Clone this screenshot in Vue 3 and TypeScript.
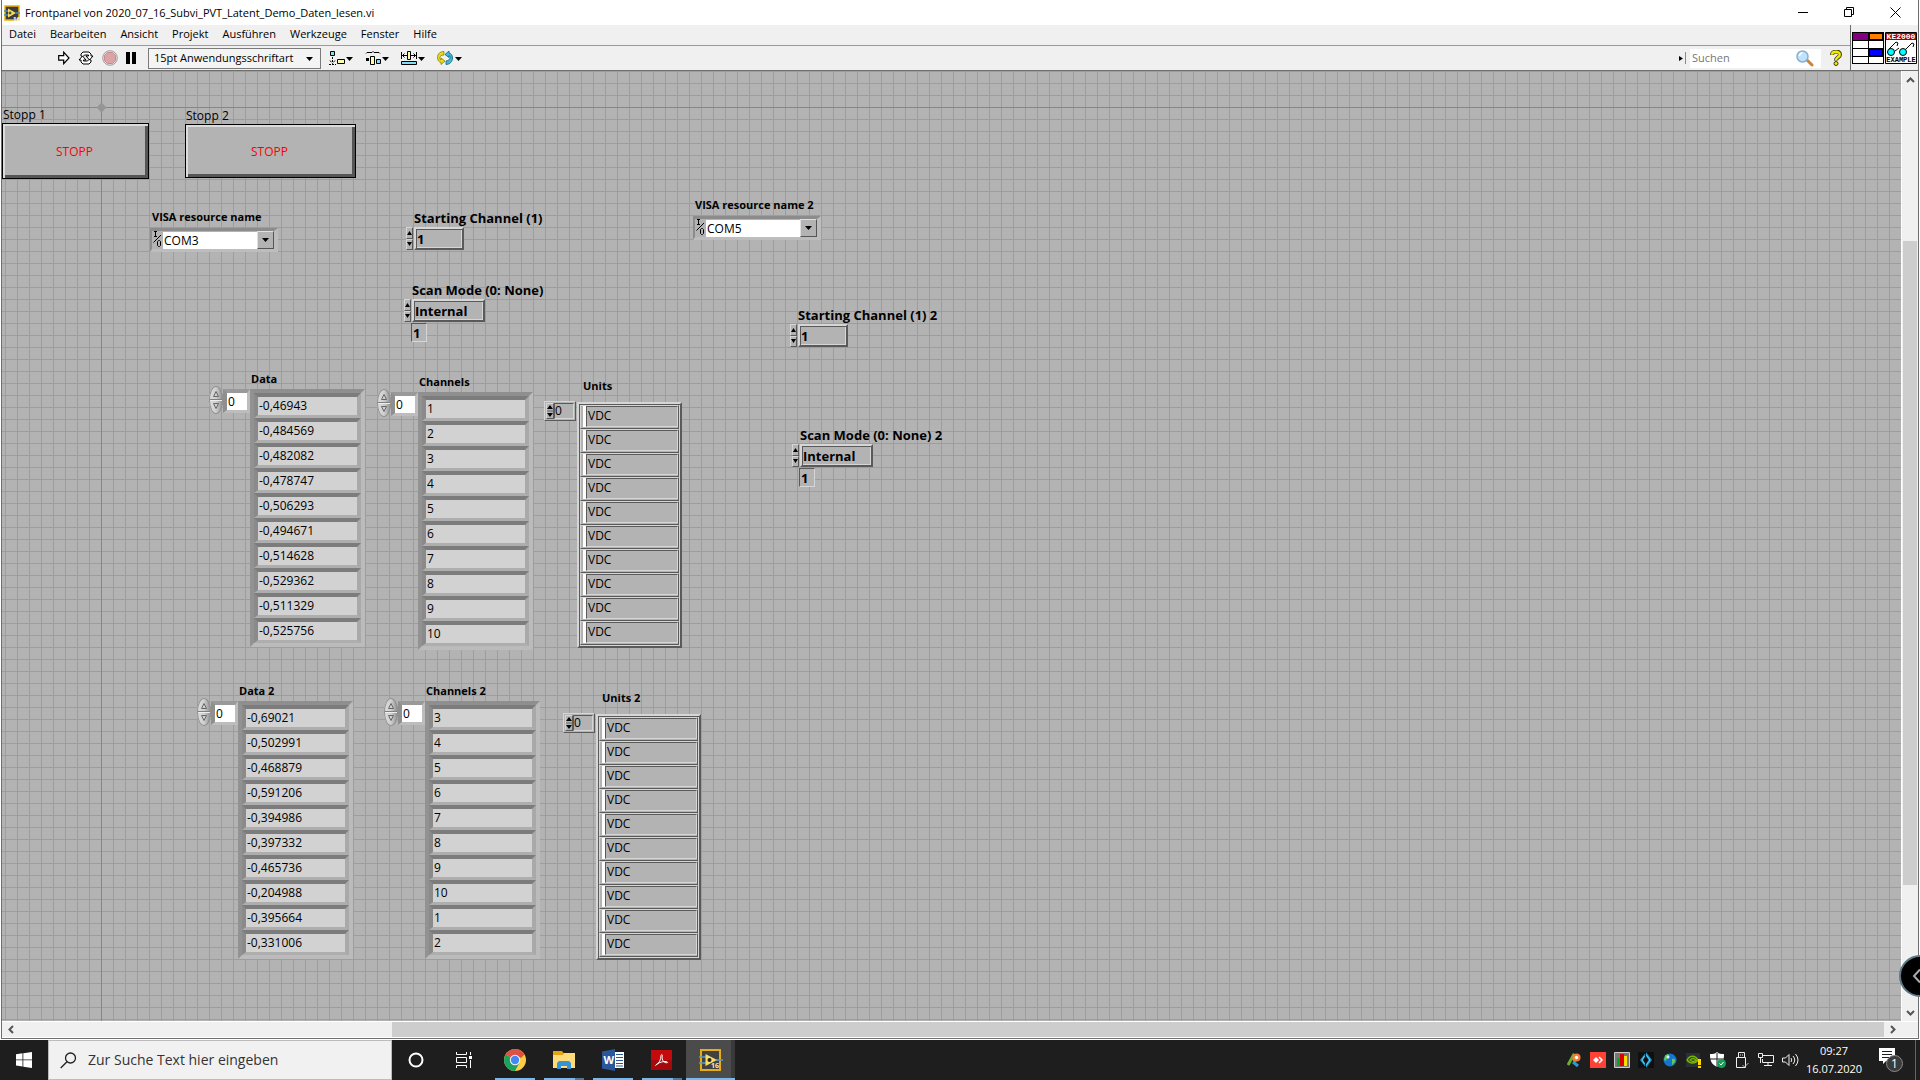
<script setup lang="ts">
import { ref } from 'vue'

interface Spot { x: number; y: number }
interface StopButton extends Spot { id: string; label: string; width: number; height: number }
interface Visa extends Spot { id: string; label: string; port: string }
interface Ring extends Spot { id: string; label: string; value: string; width: number; index?: string }
interface ArrayBlock extends Spot { id: string; label: string; plain?: boolean; values: string[] }

const menus = ['Datei', 'Bearbeiten', 'Ansicht', 'Projekt', 'Ausführen', 'Werkzeuge', 'Fenster', 'Hilfe']

const stops: StopButton[] = [
  { id: 'stop1', label: 'Stopp 1', x: 0, y: 36, width: 147, height: 56 },
  { id: 'stop2', label: 'Stopp 2', x: 183, y: 37, width: 171, height: 54 },
]

const visas: Visa[] = [
  { id: 'visa1', label: 'VISA resource name', port: 'COM3', x: 148, y: 138 },
  { id: 'visa2', label: 'VISA resource name 2', port: 'COM5', x: 691, y: 126 },
]

const rings: Ring[] = [
  { id: 'start1', label: 'Starting Channel (1)', value: '1', width: 50, x: 404, y: 139 },
  { id: 'scan1', label: 'Scan Mode (0: None)', value: 'Internal', width: 73, index: '1', x: 402, y: 211 },
  { id: 'start2', label: 'Starting Channel (1) 2', value: '1', width: 50, x: 788, y: 236 },
  { id: 'scan2', label: 'Scan Mode (0: None) 2', value: 'Internal', width: 73, index: '1', x: 790, y: 356 },
]

const vdc = Array.from({ length: 10 }, () => 'VDC')

const arrays: ArrayBlock[] = [
  {
    id: 'data1', label: 'Data', x: 207, y: 300,
    values: ['-0,46943', '-0,484569', '-0,482082', '-0,478747', '-0,506293', '-0,494671', '-0,514628', '-0,529362', '-0,511329', '-0,525756'],
  },
  { id: 'chan1', label: 'Channels', x: 375, y: 303, values: ['1', '2', '3', '4', '5', '6', '7', '8', '9', '10'] },
  { id: 'unit1', label: 'Units', x: 542, y: 307, plain: true, values: vdc },
  {
    id: 'data2', label: 'Data 2', x: 195, y: 612,
    values: ['-0,69021', '-0,502991', '-0,468879', '-0,591206', '-0,394986', '-0,397332', '-0,465736', '-0,204988', '-0,395664', '-0,331006'],
  },
  { id: 'chan2', label: 'Channels 2', x: 382, y: 612, values: ['3', '4', '5', '6', '7', '8', '9', '10', '1', '2'] },
  { id: 'unit2', label: 'Units 2', x: 561, y: 619, plain: true, values: vdc },
]

const search = ref('')
const taskSearch = ref('')
const at = (s: Spot) => ({ left: `${s.x}px`, top: `${s.y}px` })
</script>

<template>
  <div class="desktop">
    <main class="window">
      <header class="titlebar">
        <svg class="app-icon" width="16" height="16" viewBox="0 0 16 16" aria-hidden="true">
          <rect x="1" y="1" width="14" height="14" fill="#3c3c3c" stroke="#f0b400" stroke-width="1.5" />
          <path d="M0 6h4M0 10h4M12 8h4" stroke="#3b8fc4" stroke-width="1.5" />
          <path d="M4 3.500v9L12 8z" fill="#f5dc6a" />
          <path d="M6 6.500v3M4.500 8h3" stroke="#222" />
          <text x="9" y="15.500" font-size="6" font-weight="700" fill="#fff">16</text>
        </svg>
        <h1>Frontpanel von 2020_07_16_Subvi_PVT_Latent_Demo_Daten_lesen.vi</h1>
        <div class="win-buttons">
          <button type="button" aria-label="Minimieren"><svg width="11" height="11"><path d="M0 5.500h10" stroke="#000" /></svg></button>
          <button type="button" aria-label="Wiederherstellen"><svg width="11" height="11" fill="none" stroke="#000"><path d="M.5 2.500h7v7h-7zM2.500 2.500v-2h7v7h-2" /></svg></button>
          <button type="button" aria-label="Schließen"><svg width="11" height="11"><path d="M.5.5l10 10M10.500.5l-10 10" stroke="#000" /></svg></button>
        </div>
      </header>

      <div class="bars">
        <div class="bars-main">
          <nav class="menubar">
            <button v-for="m in menus" :key="m" type="button">{{ m }}</button>
          </nav>
          <div class="toolbar">
            <div class="run-tools">
              <button type="button" aria-label="Ausführen">
                <svg width="12" height="14" viewBox="0 0 12 14"><path d="M.7 4.700h5v-3.500L11 7l-5.300 5.700v-3.500h-5z" fill="#fff" stroke="#000" stroke-width="1.200" /></svg>
              </button>
              <button type="button" aria-label="Wiederholt ausführen">
                <svg width="16" height="14" viewBox="0 0 16 14" fill="#fff" stroke="#000"><path d="M3 5V3l2-2h6l2 2v2h2l-3.500 4L8 5h2.500V4h-4L5 5.500z" /><path d="M13 9v2l-2 2H5l-2-2V9H1l3.500-4L8 9H5.500v1h4L11 8.500z" /></svg>
              </button>
              <button type="button" aria-label="Abbrechen">
                <svg width="16" height="16" viewBox="0 0 16 16"><circle cx="8" cy="8" r="7.300" fill="#e9e4e4" stroke="#a39a9a" /><path d="M5.500 2.500h5l3 3v5l-3 3h-5l-3-3v-5z" fill="#dba3a6" stroke="#c58d90" /></svg>
              </button>
              <button type="button" aria-label="Pause">
                <svg width="10" height="12"><path d="M0 0h4v12H0zM6 0h4v12H6z" fill="#000" /></svg>
              </button>
            </div>
            <div class="font-pick">
              <select aria-label="Schriftart"><option>15pt Anwendungsschriftart</option></select>
              <svg width="7" height="4" aria-hidden="true"><path d="M0 0h7L3.500 4z" fill="#000" /></svg>
            </div>
            <div class="arrange-tools">
              <button type="button" aria-label="Objekte ausrichten">
                <svg width="24" height="14" viewBox="0 0 24 14"><path d="M1.500.5h4v4h-4z" fill="#7fe0f5" stroke="#000" /><path d="M3.500 6v6M1 9.500l2.500 3 2.500-3M0 13.500h7" stroke="#000" fill="none" stroke-dasharray="2 1" /><path d="M8.500 8.500h7v4h-7z" fill="#ffffa8" stroke="#000" /><path d="M17 6h7l-3.500 4z" /></svg>
              </button>
              <button type="button" aria-label="Objekte verteilen">
                <svg width="24" height="14" viewBox="0 0 24 14"><path d="M1 2.500l1-1h5l1-1 1 1h5l1 1" stroke="#000" fill="none" /><path d="M1 7h3v3H1z" /><path d="M5.500 5.500h4v8h-4z" fill="#ffffa8" stroke="#000" /><path d="M11.500 8.500h4v4h-4z" fill="#7fe0f5" stroke="#000" /><path d="M17 6h7l-3.500 4z" /></svg>
              </button>
              <button type="button" aria-label="Objektgröße ändern">
                <svg width="24" height="14" viewBox="0 0 24 14"><path d="M6.500.5h3v8h-3z" fill="#ffffa8" stroke="#000" /><path d="M.5 1v7M15.500 1v7M1 4.500h5M10 4.500h5M3.500 2.500L1.500 4.500l2 2M12.500 2.500l2 2-2 2" stroke="#000" fill="none" /><path d="M.5 10.500h15v3H.5z" fill="#7fe0f5" stroke="#000" /><path d="M17 6h7l-3.500 4z" /></svg>
              </button>
              <button type="button" aria-label="Neu anordnen">
                <svg width="25" height="14" viewBox="0 0 25 14"><path d="M7 .5C3 .5 .5 3 .5 6.500c0 3 1.500 4.500 3.500 5V13.500l4-3.500-4-3v2C3 8.500 3 8 3 6.500 3 5 4.500 4 7 4z" fill="#e8dc1c" stroke="#857c00" stroke-width=".8" /><path d="M9 13.500c4 0 6.500-3 6.500-6.500 0-3-1.500-4.500-3.500-5V0L8 3.500l4 3v-2c1 .5 1 1 1 2.500 0 1.500-1.500 2.500-4 3z" fill="#3fb8dc" stroke="#0b5f7d" stroke-width=".8" /><path d="M18 6h7l-3.500 4z" /></svg>
              </button>
            </div>
            <div class="find">
              <svg width="7" height="12" aria-hidden="true"><path d="M0 4v5l4-2.500z" fill="#000" /><path d="M6.500 0v12" stroke="#888" /></svg>
              <label class="find-box">
                <input v-model="search" type="text" placeholder="Suchen" aria-label="Suchen" />
                <svg width="18" height="17" viewBox="0 0 18 17"><path d="M10 9l6 6" stroke="#c9853a" stroke-width="3" stroke-linecap="round" /><circle cx="6.500" cy="6.500" r="5.500" fill="#bfe3fa" stroke="#8dadd0" stroke-width="1.500" /><path d="M3.500 6a3 3 0 0 1 3-3" stroke="#fff" stroke-width="1.500" fill="none" /></svg>
              </label>
              <button type="button" aria-label="Hilfe">
                <svg width="12" height="16" viewBox="0 0 12 16"><path d="M2 5c0-4.500 8-4.500 8-.5C10 7.500 6 7 6 10.500" fill="none" stroke="#3c3a00" stroke-width="4" /><path d="M2 4.800C2 .8 9.800.8 9.800 4.500 9.800 7.500 6 7 6 10" fill="none" stroke="#f3ea00" stroke-width="2.400" /><circle cx="6" cy="13.500" r="2" fill="#f3ea00" stroke="#3c3a00" /></svg>
              </button>
            </div>
          </div>
        </div>
        <div class="vi-icons">
          <svg width="32" height="32" viewBox="0 0 32 32" role="img" aria-label="Anschlussfeld">
            <path d="M0 0h32v32H0z" fill="#000" />
            <path d="M1 1h15v7H1z" fill="#800080" /><path d="M18 2h12v5H18z" fill="#ff8000" />
            <path d="M1 9h15v7H1zM17 9h14v7H17zM1 17h15v7H1zM1 25h15v6H1zM17 25h14v6H17z" fill="#fff" />
            <path d="M18 18h12v5H18z" fill="#00f" />
          </svg>
          <svg width="32" height="32" viewBox="0 0 32 32" role="img" aria-label="KE2000 Example">
            <path d="M.5.5h31v31H.5z" fill="#fff" stroke="#000" /><path d="M1 1h30v7H1z" fill="#a00000" />
            <text x="16" y="7" font-size="8" font-weight="700" text-anchor="middle" fill="#fff">KE2000</text>
            <path d="M4 17L11 10l2 1-1 3M19 19l8-8 2 1-1 3M10 19l4-3" fill="none" stroke="#000" />
            <circle cx="6" cy="20" r="3.500" fill="#0ff" stroke="#000" /><circle cx="18" cy="20" r="3.500" fill="#0ff" stroke="#000" />
            <text x="16" y="30" font-size="7" font-weight="700" text-anchor="middle" fill="#000">EXAMPLE</text>
          </svg>
        </div>
      </div>

      <div class="view">
        <section class="panel" aria-label="Frontpanel">
          <i class="axis-x"></i><i class="axis-y"></i><i class="origin"></i>

          <div v-for="s in stops" :key="s.id" class="item stop" :style="at(s)">
            <label :for="s.id">{{ s.label }}</label>
            <button :id="s.id" type="button" :style="{ width: `${s.width}px`, height: `${s.height}px` }">STOPP</button>
          </div>

          <div v-for="v in visas" :key="v.id" class="item visa" :style="at(v)">
            <label :for="v.id">{{ v.label }}</label>
            <div class="visa-box">
              <svg width="9" height="17" viewBox="0 0 9 17" fill="none" stroke="#000" aria-hidden="true"><path d="M1 .5h3M2.500.5v5M1 5.500h3M8 4l-7.500 7.500M5.500 9.500h1l1 1v4l-1 1h-1l-1-1v-4z" /></svg>
              <select :id="v.id"><option>{{ v.port }}</option></select>
              <span class="drop"><svg width="7" height="4"><path d="M0 0h7L3.500 4z" /></svg></span>
            </div>
          </div>

          <div v-for="r in rings" :key="r.id" class="item ring" :style="at(r)">
            <label :for="r.id">{{ r.label }}</label>
            <div class="ring-row">
              <div class="steps">
                <button type="button" aria-label="Erhöhen"><svg width="5" height="4"><path d="M0 4h5L2.500 0z" /></svg></button>
                <button type="button" aria-label="Verringern"><svg width="5" height="4"><path d="M0 0h5L2.500 4z" /></svg></button>
              </div>
              <input :id="r.id" type="text" :value="r.value" :style="{ width: `${r.width}px` }" />
            </div>
            <input v-if="r.index" class="ring-index" type="text" :value="r.index" :aria-label="`${r.label} Wert`" />
          </div>

          <div v-for="a in arrays" :key="a.id" class="item array" :class="{ plain: a.plain }" :style="at(a)">
            <label :for="a.id">{{ a.label }}</label>
            <div class="array-row">
              <div v-if="a.plain" class="flat-index">
                <div class="mini">
                  <svg width="6" height="14" viewBox="0 0 6 14"><path d="M0 5h6L3 1zM0 9h6l-3 4z" /><path d="M0 7h6" stroke="#666" /></svg>
                </div>
                <input :id="a.id" type="text" value="0" />
              </div>
              <template v-else>
                <svg class="oval" width="14" height="28" viewBox="0 0 14 28" aria-hidden="true">
                  <path d="M1 13.500h12" stroke="#808080" /><path d="M1 14.500h12" stroke="#eee" />
                  <path d="M4.500 10.500h5L7 5.500zM4.500 17.500h5L7 22.500z" fill="#d0d0d0" stroke="#666" />
                </svg>
                <input :id="a.id" class="deep-index" type="text" value="0" />
              </template>
              <div class="cells">
                <div v-for="(v, i) in a.values" :key="i" class="cell">
                  <input type="text" readonly :value="v" :aria-label="`${a.label} ${i}`" />
                </div>
              </div>
            </div>
          </div>
        </section>

        <div class="vscroll">
          <button type="button" aria-label="Nach oben"><svg width="9" height="6"><path d="M1 5l3.500-3.500L8 5" /></svg></button>
          <i class="before"></i><i class="thumb"></i><i class="after"></i>
          <button type="button" aria-label="Nach unten"><svg width="9" height="6"><path d="M1 1l3.500 3.500L8 1" /></svg></button>
        </div>
      </div>

      <div class="hscroll">
        <button type="button" aria-label="Nach links"><svg width="6" height="9"><path d="M5 1L1.500 4.500 5 8" /></svg></button>
        <i class="before"></i><i class="thumb"></i>
        <button type="button" aria-label="Nach rechts"><svg width="6" height="9"><path d="M1 1l3.500 3.500L1 8" /></svg></button>
        <i class="corner"></i>
      </div>
    </main>

    <button class="side-tab" type="button" aria-label="Seitenleiste öffnen">
      <svg width="42" height="42" viewBox="0 0 42 42"><circle cx="21" cy="21" r="20" fill="#000" stroke="#5d7887" stroke-width="2" /><path d="M21 14.500L15 21l6 6.500" fill="none" stroke="#aaa" stroke-width="2" /></svg>
    </button>

    <footer class="taskbar">
      <button class="start" type="button" aria-label="Start">
        <svg width="16" height="16" viewBox="0 0 16 16" fill="#fff"><path d="M0 2.200L6.500 1.300V7.500H0zM7.300 1.200L16 0v7.500H7.300zM0 8.300h6.500v6.200L0 13.600zM7.300 8.300H16V16l-8.700-1.200z" /></svg>
      </button>
      <label class="task-search">
        <svg width="17" height="17" viewBox="0 0 17 17" fill="none" stroke="#222" stroke-width="1.300"><circle cx="10.500" cy="6" r="5" /><path d="M7 9.700L.7 16" /></svg>
        <input v-model="taskSearch" type="text" placeholder="Zur Suche Text hier eingeben" aria-label="Suche" />
      </label>
      <button class="sys" type="button" aria-label="Cortana"><svg width="16" height="16"><circle cx="8" cy="8" r="6.500" fill="none" stroke="#fff" stroke-width="2" /></svg></button>
      <button class="sys" type="button" aria-label="Taskansicht">
        <svg width="17" height="16" viewBox="0 0 17 16" fill="none" stroke="#fff"><path d="M.5 0v2.500h10V0M.5 5.500h10v5H.5zM.5 16v-2.500h10V16M14.500 0v3M14.500 8v8" /><path d="M13 4h3v3h-3z" fill="#fff" stroke="none" /></svg>
      </button>
      <button class="app" type="button" aria-label="Chrome">
        <svg width="22" height="22" viewBox="0 0 22 22"><circle cx="11" cy="11" r="11" fill="#fc4" /><path d="M11 11L1.500 5.500A11 11 0 0 1 20.500 5.500z" fill="#de5145" /><path d="M1.500 5.500A11 11 0 0 0 11 22l4.500-8.500L11 11z" fill="#1aa260" /><path d="M11 5.500h9.500L17 9z" fill="#de5145" /><circle cx="11" cy="11" r="5.200" fill="#f5f5f5" /><circle cx="11" cy="11" r="4.200" fill="#4688f1" /></svg>
      </button>
      <button class="app stacked" type="button" aria-label="Explorer">
        <svg width="22" height="18" viewBox="0 0 22 18"><path d="M0 0h9l1.500 2H22v15H0z" fill="#e8a311" /><path d="M0 4h10l1-2h11v15H0z" fill="#ffdc7a" /><path d="M4 18v-6l2-2h10l2 2v6h-4v-3H8v3z" fill="#3593d8" /></svg>
      </button>
      <button class="app" type="button" aria-label="Word">
        <svg width="22" height="22" viewBox="0 0 22 22"><path d="M12 3h10v16H12z" fill="#fff" /><path d="M14 5.500h7M14 8.500h7M14 11.500h7M14 14.500h7M14 17h7" stroke="#2b579a" /><path d="M0 2.500L13 0v22L0 19.500z" fill="#2b579a" /><text x="1.500" y="15" font-size="11" font-weight="700" fill="#fff">W</text></svg>
      </button>
      <button class="app stacked" type="button" aria-label="Acrobat Reader">
        <svg width="21" height="20" viewBox="0 0 21 20"><path d="M0 0h21v20H0z" fill="#c5090c" /><path d="M0 10h21v10H0z" fill="#900a0c" opacity=".6" /><path d="M5 15c3-1.500 5-5.500 5-9 0-2 1.800-2 1.300.5C10.500 10 13 13 16 12.800c1.500-.3 0-1.500-2-1.300-3 .2-5 .8-7.500 2.200C4.500 15 4 16 5 15z" fill="none" stroke="#fff" /></svg>
      </button>
      <button class="app active" type="button" aria-label="LabVIEW">
        <svg width="24" height="22" viewBox="0 0 24 22"><path d="M2 1h19v20H2z" fill="#414141" stroke="#e8ac14" stroke-width="2" /><path d="M0 8h7M0 14h7M17 11h7" stroke="#5a9bc4" stroke-width="1.500" /><path d="M6.500 5v12L18 11z" fill="#f7dc6c" /><circle cx="10.500" cy="11" r="2" fill="#222" /><text x="12" y="19" font-size="7" font-weight="700" fill="#f4e7c0">16</text></svg>
      </button>

      <div class="tray">
        <span><svg width="14" height="14" viewBox="0 0 14 14"><path d="M1 12L6 3l2 6" fill="none" stroke="#6fae2c" stroke-width="3" /><path d="M6 9l5 4" stroke="#2c9ccb" stroke-width="3" /><circle cx="9.500" cy="4.500" r="4" fill="#f47b3b" /><circle cx="9.500" cy="4.500" r="1.700" fill="#fff" /></svg></span>
        <span><svg width="16" height="16"><path d="M0 0h16v16H0z" fill="#ff4236" /><path d="M3 8l3-3 3 3-3 3z" fill="#fff" /><path d="M9 5l3 3-3 3" fill="none" stroke="#fff" stroke-width="1.500" /></svg></span>
        <span><svg width="16" height="16"><path d="M.5.5h15v15H.5z" fill="#777" stroke="#ccc" /><path d="M3 6h3v8H3z" fill="#0a2" /><path d="M6 2h4v12H6z" fill="#d00" /><path d="M10 4h3v10h-3z" fill="#fd0" /></svg></span>
        <span><svg width="16" height="16"><path d="M0 0h16v16H0z" fill="#101010" /><path d="M8 0l6 8-6 8V12l2.500-4L8 4zM7 1.500V5L5 8l2 3v3.500L2 8z" fill="#1b8fc4" /><path d="M8 2.500l4 5.500-4 5.500M6.500 4L4 8l2.500 4" fill="none" stroke="#5fd4f5" /></svg></span>
        <span><svg width="14" height="14"><circle cx="7" cy="7" r="6.500" fill="#1674d1" /><path d="M2 2.500c3-2.500 5-1 4 1S3 6 3 8L1 7zM9 6c3-1 4 1 3 3l-3 3z" fill="#5fca4a" /><circle cx="5" cy="4" r="1.500" fill="#d8f4ff" /></svg></span>
        <span><svg width="16" height="16" viewBox="0 0 16 16"><path d="M0 1h14v14H0z" fill="#2a3038" /><path d="M1 8c3-5 8-5 11 0-3 4-8 4-11 0zM4 8c2-2 4-2 6 0-2 2-4 2-6 0z" fill="none" stroke="#76b900" stroke-width="1.300" /><path d="M12 7h3v6h-3zM12 14h3v2h-3z" fill="#ffd800" /></svg></span>
        <span><svg width="16" height="16" viewBox="0 0 16 16"><path d="M7 0c2 2 4 2 7 2 0 6-1 10-7 13C1 12 0 8 0 2c3 0 5 0 7-2z" fill="#fff" /><path d="M7 1v14M0 7h14" stroke="#1e1e1e" /><circle cx="11.500" cy="11.500" r="4.500" fill="#17a05b" /><path d="M9.500 11.500l1.500 1.500 2.500-3" stroke="#fff" fill="none" /></svg></span>
        <span><svg width="14" height="16" fill="none" stroke="#eee"><path d="M3.500 5V.5h6V5M1.500 5.500h9v10h-9zM5 3h1M7 3h1" /><path d="M7.500 13l2 2 4-4" stroke="#bbb" /></svg></span>
        <span><svg width="16" height="14" fill="none" stroke="#eee"><path d="M4 2.500h11.500v7H4.500V6M10 10v3M6 12.500h8M.5.500h4v4h-4zM2.500 5v5" /></svg></span>
        <span><svg width="17" height="14" fill="none" stroke="#eee"><path d="M.5 5v4h3L7 12.500v-11L3.500 5zM9 5q1.500 2 0 4M11 3q3.500 4 0 8M13.500 1q5 6 0 12" /></svg></span>
      </div>
      <button class="clock" type="button"><time>09:27</time><time>16.07.2020</time></button>
      <button class="notify" type="button" aria-label="Benachrichtigungen">
        <svg width="24" height="24" viewBox="0 0 24 24"><path d="M0 0h16v13H7l-3 3v-3H0z" fill="#fff" /><path d="M3 3.500h10M3 6.500h10M3 9.500h7" stroke="#1e1e1e" /><circle cx="15.500" cy="15.500" r="8" fill="#3b3b3b" stroke="#8a8a8a" /><text x="15.500" y="20" font-size="12" text-anchor="middle" fill="#fff">1</text></svg>
      </button>
      <i class="peek"></i>
    </footer>
  </div>
</template>

<style>
html, body { margin: 0; }
</style>

<style scoped>
.desktop {
  position: relative;
  display: flex;
  flex-direction: column;
  min-height: 100vh;
  overflow: hidden;
  background: #fff;
  color: #000;
  font-family: 'Segoe UI', 'Open Sans', 'Noto Sans', sans-serif;
  font-size: 12px;
  line-height: 16px;
}
.desktop *, .desktop *::before { box-sizing: border-box; }
button, input, select {
  margin: 0;
  padding: 0;
  border: 0;
  border-radius: 0;
  background: none;
  color: inherit;
  font: inherit;
  outline: 0;
  appearance: none;
}
svg { display: block; flex: none; }
button { display: flex; align-items: center; justify-content: center; }

.window {
  flex: 1;
  display: flex;
  flex-direction: column;
  margin: 0 1px 1px;
  border: solid #6e6e6e;
  border-width: 0 1px 1px;
}
.titlebar { display: flex; align-items: center; height: 25px; padding-left: 2px; background: #fff; }
h1 { flex: 1; margin: 0 0 0 5px; font-size: 11px; font-weight: 400; }
.win-buttons { display: flex; }
.win-buttons button { width: 46px; height: 24px; }

.bars { display: flex; height: 46px; background: #f0f0f0; border-bottom: 1px solid #6e6e6e; font-size: 11px; }
.bars-main { flex: 1; display: flex; flex-direction: column; }
.menubar { display: flex; height: 21px; padding-left: 7px; gap: 14px; border-bottom: 1px solid #9a9a9a; }
.menubar button { height: 18px; }
.toolbar { flex: 1; display: flex; align-items: center; }
.run-tools { display: flex; align-items: center; gap: 8px; padding-left: 56px; }
.font-pick { position: relative; width: 173px; margin-left: 12px; }
.font-pick select { width: 100%; height: 21px; padding-left: 5px; border: 1px solid #7a7a7a; background: #f4f4f4; }
.font-pick svg { position: absolute; right: 8px; top: 9px; }
.arrange-tools { display: flex; gap: 12px; padding-left: 8px; }
.find { display: flex; align-items: center; margin-left: auto; padding-right: 8px; }
.find-box { display: flex; align-items: center; width: 131px; height: 19px; margin: 0 9px 0 4px; padding: 0 7px 0 2px; background: #fff; }
.find-box input { flex: 1; min-width: 0; }
.find-box input::placeholder { color: #767676; }
.vi-icons { display: flex; gap: 1px; align-items: center; padding: 0 1px; border-left: 1px solid #6e6e6e; }
.vi-icons svg { font-family: 'Liberation Mono', monospace; }

.view { flex: 1; display: flex; }
.panel {
  position: relative;
  flex: 1;
  min-height: 900px;
  overflow: hidden;
  background-color: #b3b3b3;
  background-image: linear-gradient(to right, #9d9d9d 1px, transparent 1px), linear-gradient(#9d9d9d 1px, transparent 1px);
  background-size: 12px 12px;
  background-position: 3px 0, 0 0;
}
.axis-x { position: absolute; left: 0; right: 0; top: 36px; height: 1px; background: #868686; }
.axis-y { position: absolute; top: 0; bottom: 0; left: 99px; width: 1px; background: #868686; }
.origin { position: absolute; left: 96px; top: 33px; width: 7px; height: 7px; background: #959595; transform: rotate(45deg); }
.item { position: absolute; display: flex; flex-direction: column; align-items: flex-start; white-space: nowrap; }
.item label { line-height: 16px; }

.stop label { padding-left: 1px; }
.stop button {
  padding: 1px 2px 0 0;
  border: 1px solid #000;
  background: #b3b3b3;
  color: #f00;
  box-shadow: inset 2px 2px #dcdcdc, inset -3px -3px #555;
}

.visa label, .array label { font-size: 11px; font-weight: 700; }
.visa label { padding-left: 2px; }
.visa-box {
  position: relative;
  display: flex;
  width: 128px;
  height: 24px;
  margin-top: 3px;
  padding-left: 1px;
  border: solid;
  border-width: 3px 4px 3px 2px;
  border-color: #8c8c8c #bdbdbd #bdbdbd #8c8c8c;
  background: #b3b3b3;
}
.visa-box select { flex: 1; margin: 1px 0 0 1px; height: 17px; padding-left: 1px; background: #fff; }
.drop { display: grid; place-items: center; width: 17px; height: 18px; background: #b3b3b3; border: 1px solid; border-color: #e0e0e0 #555 #555 #e0e0e0; pointer-events: none; }

.ring label { padding-left: 8px; font-size: 13px; font-weight: 700; }
.ring-row { display: flex; height: 23px; margin-top: 1px; }
.ring input { font-size: 13px; font-weight: 700; }
.ring-row input {
  height: 23px;
  margin-left: 1px;
  padding-left: 1px;
  border: 2px solid;
  border-color: #d6d6d6 #5a5a5a #5a5a5a #d6d6d6;
  background: #b3b3b3;
  box-shadow: inset 1px 1px #5a5a5a, inset -1px -1px #d6d6d6;
}
.steps { display: flex; flex-direction: column; width: 7px; }
.steps button { flex: 1; border: 1px solid; border-color: #d6d6d6 #5a5a5a #5a5a5a #d6d6d6; background: #b3b3b3; }
.ring .ring-index { width: 16px; height: 19px; margin: 1px 0 0 7px; padding-left: 1px; border: 1px solid; border-color: #5a5a5a #d6d6d6 #d6d6d6 #5a5a5a; background: #b3b3b3; }

.array label { padding-left: 42px; height: 15px; }
.array-row { display: flex; align-items: flex-start; }
.oval { border-radius: 50%; background: linear-gradient(to right, #dedede, #cfcfcf 50%, #8a8a8a); box-shadow: inset 0 0 0 1px #8f8f8f; }
.deep-index { width: 27px; height: 24px; margin-top: 3px; padding-left: 1px; border: solid; border-width: 4px 3px 3px 4px; border-color: #999 #bdbdbd #bdbdbd #8f8f8f; background: #fff; }
.cells { width: 115px; margin-top: 3px; border: 4px solid; border-color: #8f8f8f #bbb #bbb #929292; }
.cell { height: 25px; border: solid; border-width: 4px 4px 3px; border-color: #7c7c7c #a9a9a9 #aeaeae #8a8a8a; background: #d2d2d2; }
.cell input { display: block; width: 100%; height: 17px; padding-left: 1px; }

.plain label { padding-left: 39px; height: 23px; }
.flat-index { display: flex; width: 32px; height: 20px; padding: 1px; border: 1px solid; border-color: #d6d6d6 #5a5a5a #5a5a5a #d6d6d6; background: #b3b3b3; }
.mini { display: grid; place-items: center; width: 8px; border: 1px solid; border-color: #d6d6d6 #5a5a5a #5a5a5a #d6d6d6; }
.flat-index input { flex: 1; min-width: 0; border: 1px solid; border-color: #5a5a5a #d6d6d6 #d6d6d6 #5a5a5a; }
.plain .cells { width: 105px; margin: 1px 0 0 1px; padding: 1px; border: 2px solid; border-color: #d6d6d6 #5a5a5a #5a5a5a #d6d6d6; background: #b3b3b3; box-shadow: inset 1px 1px #5a5a5a, inset -1px -1px #d6d6d6; }
.plain .cell { height: 24px; padding: 0 1px; border: 1px solid; border-color: #d6d6d6 #5a5a5a #5a5a5a #d6d6d6; background: #b3b3b3; }
.plain .cell input { width: 92px; height: 21px; margin-left: 4px; padding: 0 0 2px 1px; border: 1px solid; border-color: #5a5a5a #d6d6d6 #d6d6d6 #5a5a5a; box-shadow: -3px 0 #fff; }

.vscroll { display: flex; flex-direction: column; width: 17px; padding: 0 1px; background: #f0f0f0; border-left: 1px solid #fff; }
.vscroll button { height: 17px; }
.hscroll { display: flex; height: 17px; background: #f0f0f0; border: solid #fff; border-width: 1px 0; }
.hscroll button { width: 17px; }
.vscroll path, .hscroll path { fill: none; stroke: #555; stroke-width: 2; }
.vscroll .before { flex: 153; }
.vscroll .thumb { flex: 644; background: #cdcdcd; }
.vscroll .after { flex: 119; }
.hscroll .before { flex: 373; }
.hscroll .thumb { flex: 1492; background: #cdcdcd; }
.corner { width: 17px; }

.side-tab { position: absolute; right: -21px; bottom: 83px; width: 42px; height: 42px; }

.taskbar { display: flex; height: 40px; background: #1e1e1e; color: #fff; }
.start { width: 48px; }
.task-search { display: flex; align-items: center; gap: 11px; width: 344px; padding-left: 11px; background: #f1f1f1; border: 1px solid #bbb; }
.task-search input { flex: 1; min-width: 0; font-size: 14px; line-height: 20px; color: #333; }
.task-search input::placeholder { color: #333; }
.sys { width: 48px; }
.app { position: relative; width: 49px; }
.sys + .app { margin-left: 2px; }
.app::before { content: ''; position: absolute; left: 5px; right: 4px; bottom: 0; height: 2px; background: #76b9ed; }
.stacked::before { background: linear-gradient(to right, #76b9ed 31px, #4e7b9d 31px); }
.active { background: linear-gradient(to right, #4b4b4b 45px, #393939 45px); }
.active::before { left: 0; right: 0; }
.tray { display: flex; margin-left: auto; }
.tray span { display: grid; place-items: center; width: 24px; }
.clock { flex-direction: column; width: 64px; font-size: 11px; line-height: 18px; white-space: nowrap; }
.notify { width: 49px; }
.peek { width: 5px; border-left: 1px solid #666; }
</style>
